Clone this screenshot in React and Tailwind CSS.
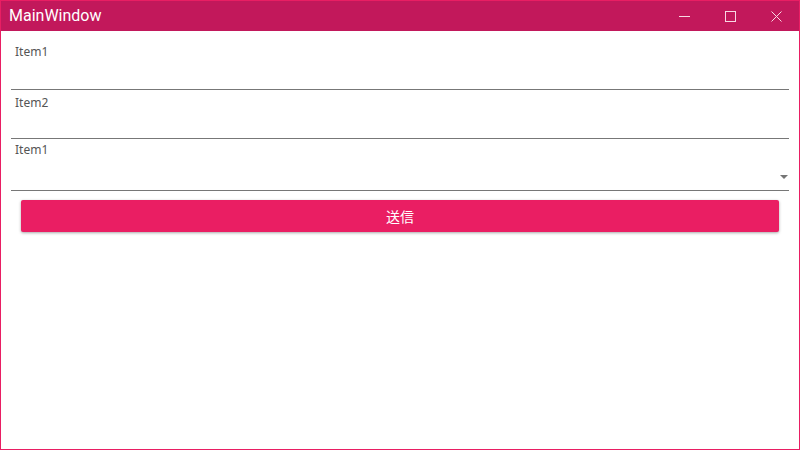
export default function App() {
  return (
    <div className="w-[800px] h-[450px] border border-[#e91e63] bg-white flex flex-col overflow-hidden" style={{ fontFamily: '"Noto Sans", "Noto Sans CJK JP", sans-serif' }}>
      <div className="h-[30px] bg-[#c2185b] flex items-center shrink-0">
        <div className="pl-[8px] text-white text-[16px] leading-none flex-1" style={{ fontFamily: 'Roboto, sans-serif' }}>MainWindow</div>
        <div className="flex items-center h-full text-[#f8d7e3]">
          <div className="w-[46px] h-full flex items-center justify-center">
            <svg width="11" height="11" viewBox="0 0 11 11"><line x1="0" y1="5.5" x2="11" y2="5.5" stroke="currentColor" strokeWidth="1" /></svg>
          </div>
          <div className="w-[46px] h-full flex items-center justify-center">
            <svg width="11" height="11" viewBox="0 0 11 11"><rect x="0.5" y="0.5" width="10" height="10" fill="none" stroke="currentColor" strokeWidth="1" /></svg>
          </div>
          <div className="w-[46px] h-full flex items-center justify-center">
            <svg width="11" height="11" viewBox="0 0 11 11"><path d="M0.5 0.5 L10.5 10.5 M10.5 0.5 L0.5 10.5" stroke="currentColor" strokeWidth="1" /></svg>
          </div>
        </div>
      </div>
      <div className="flex flex-col">
        <div className="mx-[10px] border-b border-[#777] pt-[13px] h-[59px]">
          <div className="pl-[4px] text-[12px] leading-[16px] text-[#555]">Item1</div>
        </div>
        <div className="mx-[10px] border-b border-[#777] pt-[5px] h-[49px]">
          <div className="pl-[4px] text-[12px] leading-[16px] text-[#555]">Item2</div>
        </div>
        <div className="mx-[10px] border-b border-[#777] pt-[3px] h-[52px] flex flex-col">
          <div className="pl-[4px] text-[12px] leading-[16px] text-[#555]">Item1</div>
          <div className="flex-1 flex justify-end items-start pt-[17px] pr-[1px]">
            <svg width="8" height="4" viewBox="0 0 8 4"><path d="M0 0 L8 0 L4 4 Z" fill="#757575" /></svg>
          </div>
        </div>
        <button className="mx-[20px] mt-[9px] h-[32px] bg-[#ea1e63] rounded-[2px] text-white text-[14px] flex items-center justify-center shadow-[0_1px_3px_rgba(0,0,0,0.35)]">送信</button>
      </div>
    </div>
  );
}
